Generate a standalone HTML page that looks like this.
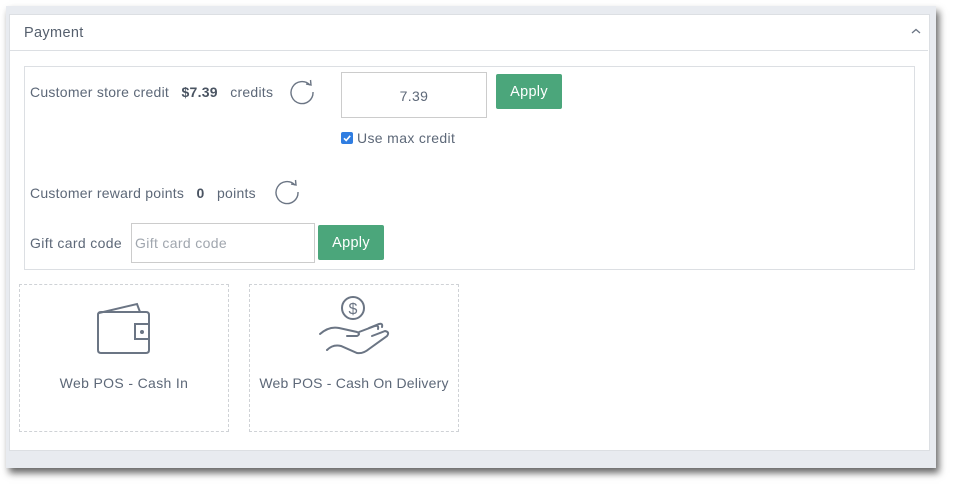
<!DOCTYPE html>
<html><head><style>
body{margin:0;width:953px;height:486px;background:#fff;font-family:"Liberation Sans",sans-serif;color:#5d6878;position:relative;overflow:hidden}
.a{position:absolute}
.frame{left:6px;top:6px;width:930px;height:462px;background:#e8ebf0;box-shadow:3px 5px 7px rgba(0,0,0,.6)}
.panel{left:9px;top:14px;width:919px;height:435px;background:#fff;border:1px solid #dcdfe3}
.t{font-size:14px;white-space:nowrap;letter-spacing:0.35px}
.btn{background:#4ba67b;color:#fff;border-radius:2px;font-size:14.5px;text-align:center;letter-spacing:0.3px}
.box{border:1px dashed #cfd2d6;background:#fff}
</style></head><body>
<div class="a frame"></div>
<div class="a panel"></div>
<div class="a t" style="left:24px;top:25px;font-size:14.5px;color:#555f6d">Payment</div>
<svg class="a" style="left:911px;top:28px" width="10" height="7"><path d="M1 5 L5 1.5 L9 5" fill="none" stroke="#6b7584" stroke-width="1.3"/></svg>
<div class="a" style="left:10px;top:50px;width:918px;height:1px;background:#dcdfe3"></div>
<div class="a" style="left:24px;top:66px;width:889px;height:202px;border:1px solid #dcdfe3"></div>
<div class="a t" style="left:30px;top:84px;letter-spacing:0.25px">Customer store credit&nbsp;&nbsp; <b style="color:#4a5462">$7.39</b>&nbsp;&nbsp; credits</div>
<svg class="a" style="left:289px;top:79px" width="28" height="26"><path d="M21 6 A11 11 0 1 0 24 13" fill="none" stroke="#6b7584" stroke-width="1.4"/><path d="M17 5 L22 6 L21.5 1" fill="none" stroke="#6b7584" stroke-width="1.4"/></svg>
<div class="a" style="left:341px;top:72px;width:144px;height:44px;border:1px solid #ccc;background:#fff"></div>
<div class="a t" style="left:341px;top:88px;width:146px;text-align:center">7.39</div>
<div class="a btn" style="left:496px;top:74px;width:66px;height:35px;line-height:37px">Apply</div>
<div class="a" style="left:341px;top:132px;width:12px;height:12px;background:#2f7de1;border-radius:2px"></div>
<svg class="a" style="left:341px;top:132px" width="12" height="12"><path d="M3 6.3 L5.2 8.5 L9.2 3.8" fill="none" stroke="#fff" stroke-width="1.6"/></svg>
<div class="a t" style="left:357px;top:130px">Use max credit</div>
<div class="a t" style="left:30px;top:185px;letter-spacing:0.25px">Customer reward points&nbsp;&nbsp; <b style="color:#4a5462">0</b>&nbsp;&nbsp; points</div>
<svg class="a" style="left:274px;top:179px" width="28" height="26"><path d="M21 6 A11 11 0 1 0 24 13" fill="none" stroke="#6b7584" stroke-width="1.4"/><path d="M17 5 L22 6 L21.5 1" fill="none" stroke="#6b7584" stroke-width="1.4"/></svg>
<div class="a t" style="left:30px;top:235px">Gift card code</div>
<div class="a" style="left:131px;top:223px;width:182px;height:38px;border:1px solid #ccc"></div>
<div class="a t" style="left:135px;top:235px;color:#a0a6ae">Gift card code</div>
<div class="a btn" style="left:318px;top:225px;width:66px;height:35px;line-height:37px">Apply</div>
<div class="a box" style="left:19px;top:284px;width:208px;height:146px"></div>
<div class="a box" style="left:249px;top:284px;width:208px;height:146px"></div>
<svg class="a" style="left:95px;top:300px" width="58" height="56" fill="none" stroke="#6b7584" stroke-width="2"><path d="M3 15 Q3 12 6 12 L51 12 Q54 12 54 15 L54 50 Q54 53 51 53 L6 53 Q3 53 3 50 Z"/><path d="M4 13 L42 4 L45 12"/><path d="M40 24 L54 24 L54 39 L40 39 Z"/><circle cx="47" cy="32" r="1" fill="#6b7584"/></svg>
<div class="a t" style="left:19px;top:375px;width:210px;text-align:center">Web POS - Cash In</div>
<svg class="a" style="left:317px;top:294px" width="75" height="64" fill="none" stroke="#6b7584" stroke-width="2" stroke-linecap="round"><circle cx="36" cy="14" r="11"/><text x="36" y="20" font-size="16" text-anchor="middle" fill="#6b7584" stroke="none" font-family="Liberation Sans">$</text><path d="M3 40 Q12 32 22 34 L40 38 Q44 40 40 42 L30 42"/><path d="M10 56 Q16 50 24 52 L40 59 Q46 60 52 55 L70 42 Q73 38 68 37 L55 42"/><path d="M42 38 L58 32 Q62 31 61 35"/><path d="M52 34 L62 30 Q66 29 65 33"/></svg>
<div class="a t" style="left:249px;top:375px;width:210px;text-align:center;letter-spacing:0.2px">Web POS - Cash On Delivery</div>
</body></html>
